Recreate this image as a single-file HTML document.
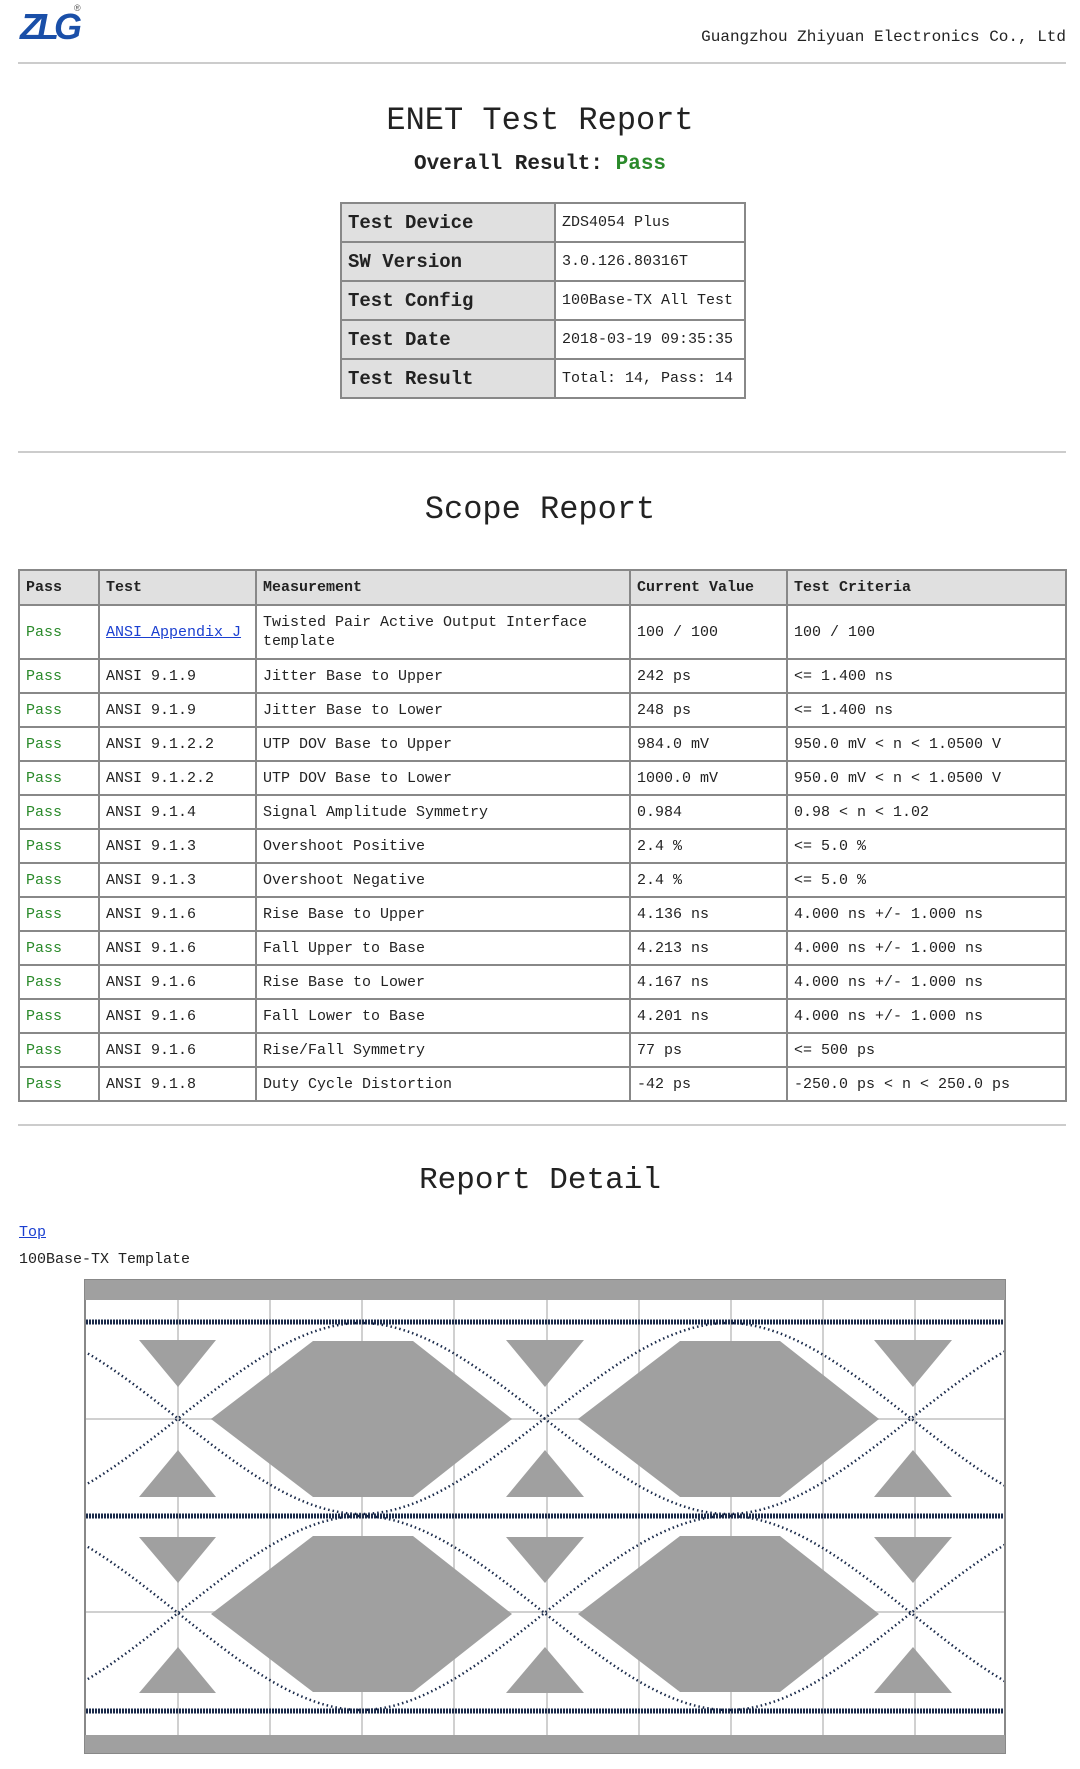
<!DOCTYPE html>
<html><head><meta charset="utf-8"><style>
body{margin:0;width:1080px;height:1769px;background:#fff;position:relative;overflow:hidden;font-family:"Liberation Mono","Noto Sans CJK SC",monospace;color:#222}
.a{position:absolute;white-space:nowrap}
.hr{position:absolute;left:18px;width:1048px;height:2px;background:#ccc}
table{border-collapse:collapse;position:absolute}
td,th{border:2px solid #888;padding:0 6px;text-align:left}
.g{color:#2a8a2a}
</style></head><body>
<div class="a" style="left:20px;top:6px;font:italic bold 36px 'Liberation Sans',sans-serif;color:#1a4fa8;letter-spacing:-5px">ZLG</div>
<div class="a" style="left:74px;top:3px;font:9px 'Liberation Sans',sans-serif;color:#555">®</div>
<div class="a" style="right:14px;top:28px;font-size:16px">Guangzhou Zhiyuan Electronics Co., Ltd</div>
<div class="hr" style="top:62px"></div>
<div class="a" style="left:0;width:1080px;text-align:center;top:102px;font-size:32px">ENET Test Report</div>
<div class="a" style="left:0;width:1080px;text-align:center;top:153px;font-size:21px;font-weight:bold">Overall Result: <span class="g">Pass</span></div>
<table style="left:340px;top:202px;width:406px">
<tr style="height:39px"><td style="background:#e0e0e0;font-weight:bold;font-size:19px;width:200px">Test Device</td><td style="font-size:15px">ZDS4054 Plus</td></tr>
<tr style="height:39px"><td style="background:#e0e0e0;font-weight:bold;font-size:19px">SW Version</td><td style="font-size:15px">3.0.126.80316T</td></tr>
<tr style="height:39px"><td style="background:#e0e0e0;font-weight:bold;font-size:19px">Test Config</td><td style="font-size:15px">100Base-TX All Test</td></tr>
<tr style="height:39px"><td style="background:#e0e0e0;font-weight:bold;font-size:19px">Test Date</td><td style="font-size:15px">2018-03-19 09:35:35</td></tr>
<tr style="height:39px"><td style="background:#e0e0e0;font-weight:bold;font-size:19px">Test Result</td><td style="font-size:15px">Total: 14, Pass: 14</td></tr>
</table>
<div class="hr" style="top:451px"></div>
<div class="a" style="left:0;width:1080px;text-align:center;top:491px;font-size:32px">Scope Report</div>
<table style="left:18px;top:569px;width:1049px;font-size:15px">
<tr style="height:35px;background:#e0e0e0;font-weight:bold"><td style="width:66px">Pass</td><td style="width:143px">Test</td><td style="width:360px">Measurement</td><td style="width:143px">Current Value</td><td>Test Criteria</td></tr>
<tr style="height:54px"><td class="g">Pass</td><td><u style="color:#1a3fd0">ANSI Appendix J</u></td><td style="line-height:19px">Twisted Pair Active Output Interface<br>template</td><td>100 / 100</td><td>100 / 100</td></tr>
<tr style="height:34px"><td class="g">Pass</td><td>ANSI 9.1.9</td><td>Jitter Base to Upper</td><td>242 ps</td><td>&lt;= 1.400 ns</td></tr>
<tr style="height:34px"><td class="g">Pass</td><td>ANSI 9.1.9</td><td>Jitter Base to Lower</td><td>248 ps</td><td>&lt;= 1.400 ns</td></tr>
<tr style="height:34px"><td class="g">Pass</td><td>ANSI 9.1.2.2</td><td>UTP DOV Base to Upper</td><td>984.0 mV</td><td>950.0 mV &lt; n &lt; 1.0500 V</td></tr>
<tr style="height:34px"><td class="g">Pass</td><td>ANSI 9.1.2.2</td><td>UTP DOV Base to Lower</td><td>1000.0 mV</td><td>950.0 mV &lt; n &lt; 1.0500 V</td></tr>
<tr style="height:34px"><td class="g">Pass</td><td>ANSI 9.1.4</td><td>Signal Amplitude Symmetry</td><td>0.984</td><td>0.98 &lt; n &lt; 1.02</td></tr>
<tr style="height:34px"><td class="g">Pass</td><td>ANSI 9.1.3</td><td>Overshoot Positive</td><td>2.4 %</td><td>&lt;= 5.0 %</td></tr>
<tr style="height:34px"><td class="g">Pass</td><td>ANSI 9.1.3</td><td>Overshoot Negative</td><td>2.4 %</td><td>&lt;= 5.0 %</td></tr>
<tr style="height:34px"><td class="g">Pass</td><td>ANSI 9.1.6</td><td>Rise Base to Upper</td><td>4.136 ns</td><td>4.000 ns +/- 1.000 ns</td></tr>
<tr style="height:34px"><td class="g">Pass</td><td>ANSI 9.1.6</td><td>Fall Upper to Base</td><td>4.213 ns</td><td>4.000 ns +/- 1.000 ns</td></tr>
<tr style="height:34px"><td class="g">Pass</td><td>ANSI 9.1.6</td><td>Rise Base to Lower</td><td>4.167 ns</td><td>4.000 ns +/- 1.000 ns</td></tr>
<tr style="height:34px"><td class="g">Pass</td><td>ANSI 9.1.6</td><td>Fall Lower to Base</td><td>4.201 ns</td><td>4.000 ns +/- 1.000 ns</td></tr>
<tr style="height:34px"><td class="g">Pass</td><td>ANSI 9.1.6</td><td>Rise/Fall Symmetry</td><td>77 ps</td><td>&lt;= 500 ps</td></tr>
<tr style="height:34px"><td class="g">Pass</td><td>ANSI 9.1.8</td><td>Duty Cycle Distortion</td><td>-42 ps</td><td>-250.0 ps &lt; n &lt; 250.0 ps</td></tr>
</table>
<div class="hr" style="top:1124px"></div>
<div class="a" style="left:0;width:1080px;text-align:center;top:1163px;font-size:31px">Report Detail</div>
<div class="a" style="left:19px;top:1224px;font-size:15px;color:#1a3fd0;text-decoration:underline">Top</div>
<div class="a" style="left:19px;top:1251px;font-size:15px">100Base-TX Template</div>
<svg class="a" style="left:0;top:0" width="1080" height="1769">
<defs><clipPath id="c"><rect x="86" y="1300" width="918" height="435"/></clipPath></defs>
<rect x="85" y="1280" width="920" height="473" fill="#fff" stroke="#888" stroke-width="2"/>
<rect x="85" y="1280" width="920" height="20" fill="#a0a0a0"/>
<rect x="85" y="1735" width="920" height="18" fill="#a0a0a0"/>
<g stroke="#d0d0d0" stroke-width="2">
<path d="M178 1300V1735M270 1300V1735M362 1300V1735M454 1300V1735M547 1300V1735M639 1300V1735M731 1300V1735M823 1300V1735M915 1300V1735"/>
<path d="M86 1419H1004M86 1612H1004"/>
</g>
<g fill="#a0a0a0">
<path d="M139 1340H216L178 1387Z M139 1497H216L178 1450Z M506 1340H584L545 1387Z M506 1497H584L545 1450Z M874 1340H952L913 1387Z M874 1497H952L913 1450Z"/>
<path d="M139 1537H216L178 1583Z M139 1693H216L178 1647Z M506 1537H584L545 1583Z M506 1693H584L545 1647Z M874 1537H952L913 1583Z M874 1693H952L913 1647Z"/>
<path d="M211 1419L313 1341H413L512 1419L413 1497H313Z M578 1419L680 1341H780L879 1419L780 1497H680Z"/>
<path d="M211 1614L313 1536H413L512 1614L413 1692H313Z M578 1614L680 1536H780L879 1614L780 1692H680Z"/>
</g>
<g clip-path="url(#c)" fill="none" stroke="#1a2a4a">
<path stroke-width="5" stroke-dasharray="2 1" d="M86 1322H1004M86 1516H1004M86 1711H1004"/>
<g stroke-width="2.5" stroke-dasharray="1.5 3">
<path d="M-5 1323C118 1323 238 1514 361 1514C484 1514 605 1323 728 1323C851 1323 971 1514 1094 1514"/>
<path d="M-5 1514C118 1514 238 1323 361 1323C484 1323 605 1514 728 1514C851 1514 971 1323 1094 1323"/>
<path d="M-5 1516C118 1516 238 1710 361 1710C484 1710 605 1516 728 1516C851 1516 971 1710 1094 1710"/>
<path d="M-5 1710C118 1710 238 1516 361 1516C484 1516 605 1710 728 1710C851 1710 971 1516 1094 1516"/>
</g></g>
</svg>
</body></html>
